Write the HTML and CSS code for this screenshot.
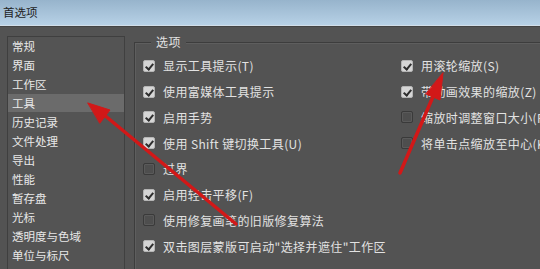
FILE: index.html
```html
<!DOCTYPE html>
<html><head><meta charset="utf-8"><title>首选项</title><link rel="stylesheet" href="styles.css"></head>
<body>
<div class="titlebar">首选项</div>
<div class="main">
  <div class="list">
    <div class="item">常规</div>
    <div class="item">界面</div>
    <div class="item">工作区</div>
    <div class="item sel">工具</div>
    <div class="item">历史记录</div>
    <div class="item">文件处理</div>
    <div class="item">导出</div>
    <div class="item">性能</div>
    <div class="item">暂存盘</div>
    <div class="item">光标</div>
    <div class="item">透明度与色域</div>
    <div class="item">单位与标尺</div>
  </div>
  <div class="group">
    <div class="legend">选项</div>
    <div class="opts">
      <div class="opt on"><span class="box"></span>显示工具提示(T)</div>
      <div class="opt on"><span class="box"></span>用滚轮缩放(S)</div>
      <div class="opt on"><span class="box"></span>使用富媒体工具提示</div>
      <div class="opt on"><span class="box"></span>带动画效果的缩放(Z)</div>
      <div class="opt on"><span class="box"></span>启用手势</div>
      <div class="opt"><span class="box"></span>缩放时调整窗口大小(R)</div>
      <div class="opt on"><span class="box"></span>使用 Shift 键切换工具(U)</div>
      <div class="opt"><span class="box"></span>将单击点缩放至中心(K)</div>
      <div class="opt"><span class="box"></span>过界</div>
      <div class="opt"></div>
      <div class="opt on"><span class="box"></span>启用轻击平移(F)</div>
      <div class="opt"></div>
      <div class="opt"><span class="box"></span>使用修复画笔的旧版修复算法</div>
      <div class="opt"></div>
      <div class="opt on wide"><span class="box"></span>双击图层蒙版可启动"选择并遮住"工作区</div>
    </div>
  </div>
</div>
<svg class="arrows" width="540" height="269" viewBox="0 0 540 269">
  <g fill="#d21818" stroke="#d21818" stroke-linecap="round">
    <line x1="236" y1="224" x2="103" y2="114" stroke-width="3.5"/>
    <polygon points="88,103 110,110 100,123" stroke-width="1"/>
    <line x1="400" y1="173" x2="435" y2="92" stroke-width="3.5"/>
    <polygon points="443,73 440,100 426,94" stroke-width="1"/>
  </g>
</svg>
</body></html>
```
FILE: styles.css
```css
body {margin:0;width:540px;height:269px;overflow:hidden;background:#535353;color:#e2e2e2;font-family:"Noto Sans CJK SC","Liberation Sans",sans-serif;position:relative}
.titlebar {height:25px;padding-left:3px;font-size:11.5px;line-height:25px;color:#1e1e1e;background:linear-gradient(#97b4cc,#b7d1e6);border-bottom:1px solid #d2dee9;box-shadow:0 1px 0 #444}
.main {display:flex;padding-top:10px}
.list {margin-left:7px;width:116px;height:240px;border:1px solid #3f3f3f;border-bottom:none;border-right-color:#404040;background:#545454}
.item {height:19px;line-height:19px;padding-left:4px;font-size:11.5px;white-space:nowrap;color:#e8e8e8}
.item.sel {background:#6b6b6b;height:18px;line-height:18px;margin-bottom:1px}
.group {margin-left:9px;margin-top:6px;flex:1;border-top:1px solid #3d3d3d;border-left:1px solid #3d3d3d;box-shadow:inset 1px 1px 0 #5e5e5e;position:relative;padding:10px 0 0 8px}
.legend {position:absolute;left:16px;top:-9px;padding:0 5px;background:#535353;font-size:12px;line-height:16px;letter-spacing:0.5px}
.opts {display:grid;grid-template-columns:258px 1fr;grid-auto-rows:25.75px}
.opt {display:flex;align-items:center;font-size:12px;letter-spacing:0.4px;white-space:nowrap;overflow:hidden}
.opt.wide {grid-column:1 / 3}
.box {width:10px;height:10px;margin-right:8px;flex:none;border:1px solid #3a3a3a;border-radius:2px;background:#4e4e4e;box-shadow:inset 0 0 0 1px #5a5a5a}
.opt.on .box {background:#d6d6d6;border-color:#b5b5b5;box-shadow:none;position:relative}
.opt.on .box::after {content:"";position:absolute;left:3px;top:1px;width:3px;height:6px;border:solid #2e2e2e;border-width:0 2px 2px 0;transform:rotate(40deg)}
.arrows {position:absolute;left:0;top:0;pointer-events:none}
```
